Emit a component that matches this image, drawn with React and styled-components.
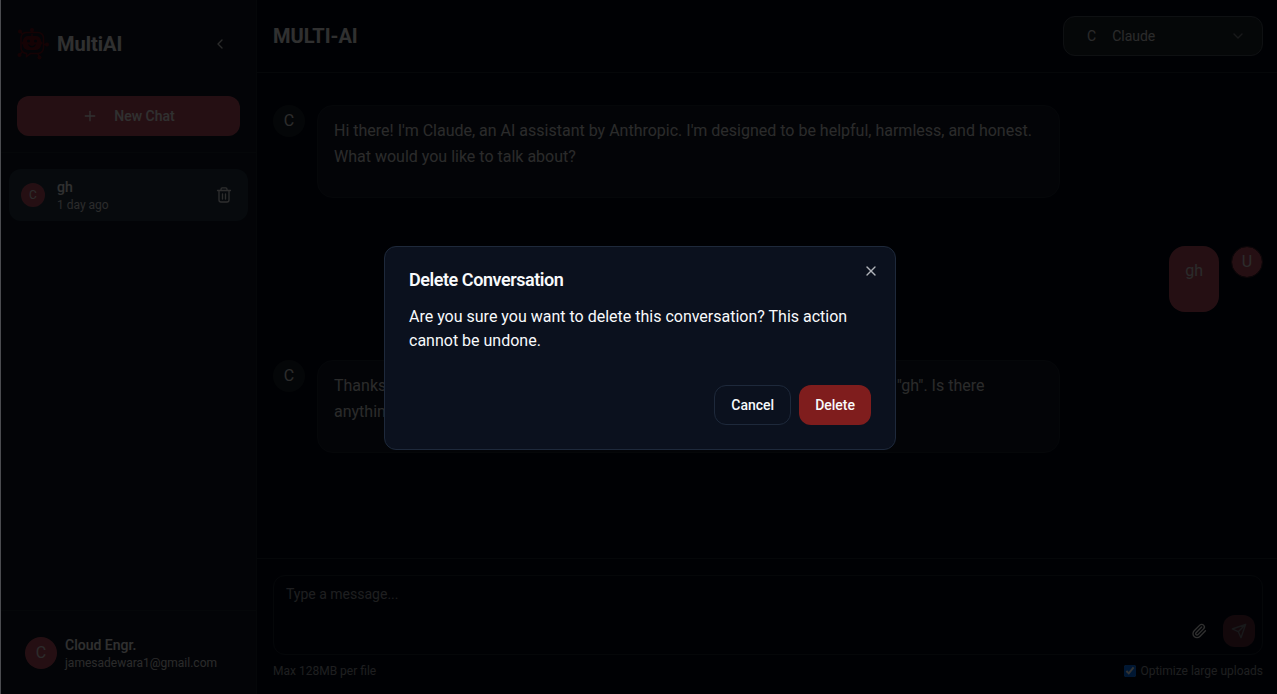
import React from "react";
import styled, { createGlobalStyle, css } from "styled-components";
import { ChevronLeft, ChevronDown, Plus, X, Paperclip } from "lucide-react";

const GlobalStyle = createGlobalStyle`
  *, *::before, *::after { box-sizing: border-box; }
  body {
    margin: 0;
    overflow: hidden;
    background: #020817;
    color: #f0f0f0;
    font-family: Roboto, "Liberation Sans", sans-serif;
    font-size: 16px;
    line-height: 24px;
  }
  button, input, select, textarea { font: inherit; color: inherit; }
  button { border: 0; padding: 0; background: none; cursor: pointer; }
  h1, h2, p, ul { margin: 0; padding: 0; }
`;

const Shell = styled.div`
  display: flex;
  height: 100vh;
  border-left: 1px solid #4b4c50;
`;

const Sidebar = styled.aside`
  display: flex;
  flex-direction: column;
  flex: 0 0 256px;
  background: #0f1623;
  border-right: 1px solid #1b2330;
`;

const Brand = styled.div`
  display: flex;
  align-items: center;
  gap: 8px;
  padding: 24px 16px 16px;
`;

const BrandName = styled.h2`
  flex: 1;
  font-size: 20px;
  font-weight: 700;
  line-height: 28px;
`;

const IconButton = styled.button`
  display: flex;
  align-items: center;
  justify-content: center;
  width: ${(p) => p.$size}px;
  height: ${(p) => p.$size}px;
  border-radius: 12px;
`;

const NewChatArea = styled.div`
  padding: 16px;
  border-bottom: 1px solid #1b2330;
`;

const NewChatButton = styled.button`
  display: flex;
  align-items: center;
  justify-content: center;
  gap: 16px;
  width: 100%;
  height: 40px;
  border-radius: 12px;
  background: #b94e60;
  font-size: 14px;
  font-weight: 500;
`;

const ConversationList = styled.ul`
  flex: 1;
  padding: 16px 8px;
  list-style: none;
`;

const Conversation = styled.li`
  display: flex;
  align-items: center;
  gap: 12px;
  padding: 8px 12px;
  border-radius: 12px;
  background: #233444;
`;

const Avatar = styled.span`
  display: flex;
  flex: none;
  align-items: center;
  justify-content: center;
  width: ${(p) => p.$size}px;
  height: ${(p) => p.$size}px;
  border-radius: 50%;
  font-size: ${(p) => (p.$size > 24 ? 16 : 12)}px;
  color: #dcdcdc;
  background: ${(p) => (p.$muted ? "#182029" : "#b94e60")};
  ${(p) =>
    p.$ring &&
    css`
      border: 1px solid #47202b;
      background-clip: padding-box;
    `}
`;

const Stack = styled.span`
  display: flex;
  flex: 1;
  flex-direction: column;
  min-width: 0;
  text-align: left;
`;

const Primary = styled.span`
  font-size: 14px;
  font-weight: 500;
  line-height: 20px;
`;

const Secondary = styled.span`
  font-size: 12px;
  line-height: 16px;
  color: #d4d4d4;
`;

const Account = styled.div`
  padding: 16px 16px 15px;
  border-top: 1px solid #1b2330;
`;

const AccountButton = styled.button`
  display: flex;
  align-items: center;
  gap: 8px;
  width: 100%;
  padding: 8px;
`;

const Main = styled.main`
  display: flex;
  flex: 1;
  flex-direction: column;
  min-width: 0;
`;

const TopBar = styled.header`
  display: flex;
  align-items: center;
  justify-content: space-between;
  padding: 16px 14px 16px 16px;
  border-bottom: 1px solid #1b2330;
`;

const PageTitle = styled.h1`
  font-size: 20px;
  font-weight: 700;
  line-height: 28px;
`;

const ModelPicker = styled.label`
  display: flex;
  align-items: center;
  width: 200px;
  height: 40px;
  padding: 0 16px 0 23px;
  gap: 16px;
  border: 1px solid #48505a;
  border-radius: 12px;
  background: #1c232c;
  font-size: 14px;
  color: #d4d4d4;

  select {
    flex: 1;
    min-width: 0;
    padding: 0;
    border: 0;
    background: none;
    appearance: none;
  }
`;

const Messages = styled.section`
  display: flex;
  flex: 1;
  flex-direction: column;
  gap: 48px;
  min-height: 0;
  padding: 32px 14px 32px 16px;
`;

const Message = styled.article`
  display: flex;
  align-items: flex-start;
  gap: 12px;
  flex-direction: ${(p) => (p.$own ? "row-reverse" : "row")};
`;

const Bubble = styled.div`
  max-width: 75%;
  padding: 12px 16px;
  border-radius: 16px;
  line-height: 26px;
  color: #d4d4d4;
  background: ${(p) => (p.$own ? "#b94e60" : "#0f1623")};
  border: ${(p) => (p.$own ? "0" : "1px solid #1b2330")};

  p { margin-bottom: ${(p) => (p.$own ? 16 : 15)}px; }
`;

const Composer = styled.form`
  padding: 16px 14px 15px 16px;
  border-top: 1px solid #1b2330;
`;

const InputBox = styled.div`
  display: flex;
  align-items: flex-end;
  gap: 8px;
  height: 80px;
  padding-right: 7px;
  padding-bottom: 7px;
  border: 1px solid #1b2330;
  border-radius: 12px;

  textarea {
    flex: 1;
    align-self: stretch;
    padding: 8px 12px;
    border: 0;
    outline: 0;
    resize: none;
    background: none;
    font-size: 14px;
    line-height: 20px;
  }
  textarea::placeholder { color: #94989e; opacity: 1; }
`;

const SendButton = styled(IconButton)`
  background: #b94e60;
  opacity: 0.5;
`;

const ComposerFoot = styled.div`
  display: flex;
  justify-content: space-between;
  margin-top: 8px;
  font-size: 12px;
  line-height: 16px;
  color: #94989e;
`;

const CheckLabel = styled.label`
  display: flex;
  align-items: center;
  gap: 4px;

  input {
    width: 12px;
    height: 12px;
    margin: 0;
  }
`;

const Overlay = styled.div`
  position: fixed;
  inset: 0 0 0 1px;
  display: flex;
  align-items: center;
  justify-content: center;
  padding: 2px 0 0 2px;
  background: rgba(0, 0, 0, 0.8);
`;

const Dialog = styled.div`
  position: relative;
  display: flex;
  flex-direction: column;
  gap: 16px;
  width: 100%;
  max-width: 512px;
  padding: 24px;
  border: 1px solid #1e293b;
  border-radius: 12px;
  background: #0b111e;
  color: #f8fafc;
`;

const DialogTitle = styled.h2`
  font-size: 18px;
  font-weight: 600;
  line-height: 18px;
  letter-spacing: -0.025em;
`;

const DialogText = styled.p`
  && { padding-bottom: 16px; }
`;

const DialogActions = styled.div`
  display: flex;
  justify-content: flex-end;
  gap: 8px;
`;

const DialogButton = styled.button`
  height: 40px;
  padding: 0 16px;
  border-radius: 12px;
  font-size: 14px;
  font-weight: 500;
  ${(p) =>
    p.$danger
      ? css`
          background: #7f1d1d;
        `
      : css`
          border: 1px solid #1e293b;
        `}
`;

const CloseButton = styled.button`
  position: absolute;
  top: 16px;
  right: 16px;
  display: flex;
  opacity: 0.7;
`;

function Logo() {
  return (
    <svg width="32" height="32" viewBox="0 0 32 32" fill="none" stroke="#6a0c18" strokeWidth="1.5" aria-hidden="true">
      <path d="M9 4.500h12a5.500 5.500 0 0 1 5.500 5.500v10a5.500 5.500 0 0 1-5.500 5.500h-7.500l-4 3v-3A5.500 5.500 0 0 1 4 20V10a5.500 5.500 0 0 1 5-5.500z" />
      <path d="M15 4V2M5.500 6 3 3.500M26.500 16.500H30M5 24l-2.500 3M21 26l1.500 3M15 9V6" />
      <g fill="#6a0c18" stroke="none">
        <circle cx="15" cy="2" r="2" />
        <circle cx="3" cy="3.500" r="2" />
        <circle cx="30" cy="16.500" r="2" />
        <circle cx="2.500" cy="27" r="2" />
        <circle cx="22.500" cy="29.500" r="2" />
        <path fillRule="evenodd" d="M11 8h8a5 5 0 0 1 5 5v.5a1.500 1.500 0 0 1 0 3V17a5 5 0 0 1-5 5h-8a5 5 0 0 1-5-5v-.5a1.500 1.500 0 0 1 0-3V13a5 5 0 0 1 5-5zM11.500 11.500a1.500 1.500 0 1 0 0 3 1.500 1.500 0 0 0 0-3zM18.500 11.500a1.500 1.500 0 1 0 0 3 1.500 1.500 0 0 0 0-3zM11 16.500c1.500 4 6.500 4 8 0l-1-.3c-1.500 2.300-4.500 2.300-6 0z" />
      </g>
    </svg>
  );
}

function TrashIcon() {
  return (
    <svg width="16" height="16" viewBox="0 0 16 16" fill="none" stroke="#e6e6e6" strokeWidth="1.3" strokeLinecap="round" strokeLinejoin="round" aria-hidden="true">
      <path d="M1.500 3.500h13M3 3.500v9.500a2 2 0 0 0 2 2h6a2 2 0 0 0 2-2V3.500M5 3.500V2.200A1.300 1.300 0 0 1 6.300.9h3.400A1.300 1.300 0 0 1 11 2.200v1.300M6.500 7v5M9.500 7v5" />
    </svg>
  );
}

function SendIcon() {
  return (
    <svg width="16" height="16" viewBox="0 0 24 24" fill="none" stroke="currentColor" strokeWidth="2" strokeLinecap="round" strokeLinejoin="round" aria-hidden="true">
      <path d="m22 2-7 20-4-9-9-4ZM22 2 11 13" />
    </svg>
  );
}

export default function App() {
  return (
    <>
      <GlobalStyle />
      <Shell>
        <Sidebar>
          <Brand>
            <Logo />
            <BrandName>MultiAI</BrandName>
            <IconButton $size={40} aria-label="Collapse sidebar">
              <ChevronLeft size={16} color="#d4d4d4" />
            </IconButton>
          </Brand>
          <NewChatArea>
            <NewChatButton>
              <Plus size={16} />
              New Chat
            </NewChatButton>
          </NewChatArea>
          <ConversationList>
            <Conversation>
              <Avatar $size={24}>C</Avatar>
              <Stack>
                <Primary>gh</Primary>
                <Secondary>1 day ago</Secondary>
              </Stack>
              <IconButton $size={24} aria-label="Delete conversation">
                <TrashIcon />
              </IconButton>
            </Conversation>
          </ConversationList>
          <Account>
            <AccountButton>
              <Avatar $size={32}>C</Avatar>
              <Stack>
                <Primary>Cloud Engr.</Primary>
                <Secondary>jamesadewara1@gmail.com</Secondary>
              </Stack>
            </AccountButton>
          </Account>
        </Sidebar>
        <Main>
          <TopBar>
            <PageTitle>MULTI-AI</PageTitle>
            <ModelPicker>
              <span>C</span>
              <select aria-label="Model" defaultValue="claude">
                <option value="claude">Claude</option>
              </select>
              <ChevronDown size={16} opacity={0.5} />
            </ModelPicker>
          </TopBar>
          <Messages>
            <Message>
              <Avatar $size={32} $muted>C</Avatar>
              <Bubble>
                <p>
                  Hi there! I'm Claude, an AI assistant by Anthropic. I'm designed to be helpful,
                  harmless, and honest. What would you like to talk about?
                </p>
              </Bubble>
            </Message>
            <Message $own>
              <Avatar $size={32} $ring>U</Avatar>
              <Bubble $own>
                <p>gh</p>
              </Bubble>
            </Message>
            <Message>
              <Avatar $size={32} $muted>C</Avatar>
              <Bubble>
                <p>
                  Thanks for your message. I'm Claude, and I'm happy to be here to help you with "gh". Is there
                  anything specific you would like to know?
                </p>
              </Bubble>
            </Message>
          </Messages>
          <Composer onSubmit={(e) => e.preventDefault()}>
            <InputBox>
              <textarea aria-label="Message" placeholder="Type a message..." />
              <IconButton $size={32} type="button" aria-label="Attach file">
                <Paperclip size={16} />
              </IconButton>
              <SendButton $size={32} aria-label="Send">
                <SendIcon />
              </SendButton>
            </InputBox>
            <ComposerFoot>
              <span>Max 128MB per file</span>
              <CheckLabel>
                <input type="checkbox" defaultChecked />
                Optimize large uploads
              </CheckLabel>
            </ComposerFoot>
          </Composer>
        </Main>
      </Shell>
      <Overlay>
        <Dialog role="dialog" aria-modal="true" aria-labelledby="delete-title">
          <DialogTitle id="delete-title">Delete Conversation</DialogTitle>
          <DialogText>
            Are you sure you want to delete this conversation? This action cannot be undone.
          </DialogText>
          <DialogActions>
            <DialogButton>Cancel</DialogButton>
            <DialogButton $danger>Delete</DialogButton>
          </DialogActions>
          <CloseButton aria-label="Close">
            <X size={16} />
          </CloseButton>
        </Dialog>
      </Overlay>
    </>
  );
}
